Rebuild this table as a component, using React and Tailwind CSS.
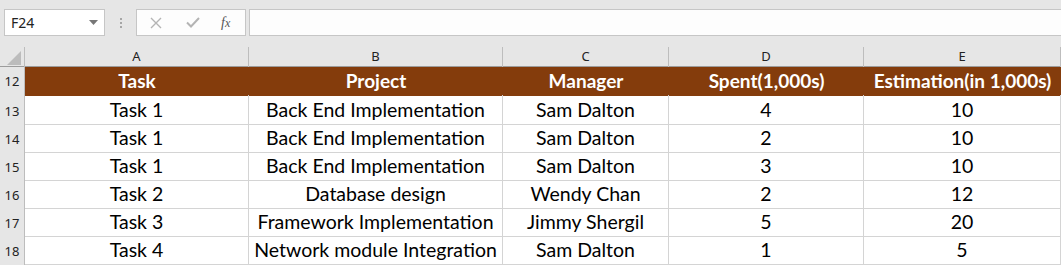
import React from 'react';

const rows = [
  { n: 13, task: 'Task 1', project: 'Back End Implementation', manager: 'Sam Dalton', spent: '4', est: '10' },
  { n: 14, task: 'Task 1', project: 'Back End Implementation', manager: 'Sam Dalton', spent: '2', est: '10' },
  { n: 15, task: 'Task 1', project: 'Back End Implementation', manager: 'Sam Dalton', spent: '3', est: '10' },
  { n: 16, task: 'Task 2', project: 'Database design', manager: 'Wendy Chan', spent: '2', est: '12' },
  { n: 17, task: 'Task 3', project: 'Framework Implementation', manager: 'Jimmy Shergil', spent: '5', est: '20' },
  { n: 18, task: 'Task 4', project: 'Network module Integration', manager: 'Sam Dalton', spent: '1', est: '5' },
];

const cols = 'grid grid-cols-[25px_224px_254px_166px_195px_1fr]';
const cell = 'flex items-center justify-center border-r border-b border-[#d4d4d4] text-[19.5px] text-black';
const rowHead = "flex items-end justify-center pb-[3px] border-r border-b border-[#bdbdbd] bg-[#e6e6e6] text-[13px] text-[#222] font-['Noto_Sans',sans-serif]";

function FormulaBar() {
  return (
    <div className="flex h-[47px] pt-[9px] pl-[4px]">
      <div className="flex h-[27px] w-[101px] items-center justify-between border border-[#c6c6c6] bg-white pl-[6px] pr-[6px] text-[14px] text-[#222]">
        <span>F24</span>
        <svg width="9" height="5" viewBox="0 0 9 5"><path d="M0 0h9L4.5 5z" fill="#777" /></svg>
      </div>
      <div className="flex h-[27px] w-[31px] flex-col items-center justify-center gap-[2px]">
        <span className="h-[2px] w-[2px] bg-[#a6a6a6]" />
        <span className="h-[2px] w-[2px] bg-[#a6a6a6]" />
        <span className="h-[2px] w-[2px] bg-[#a6a6a6]" />
      </div>
      <div className="flex h-[27px] w-[110px] items-center border border-[#c6c6c6] bg-[#fdfdfd]">
        <svg className="ml-[13px]" width="12" height="12" viewBox="0 0 12 12">
          <path d="M1 1l10 10M11 1L1 11" stroke="#b4b4b4" strokeWidth="1.4" />
        </svg>
        <svg className="ml-[24px]" width="14" height="11" viewBox="0 0 14 11">
          <path d="M1 5.5l4 4L13 1" stroke="#b4b4b4" strokeWidth="2" fill="none" />
        </svg>
        <span className="ml-[21px] font-['Liberation_Serif',serif] text-[14px] italic text-[#555]">
          f<span className="text-[12px]">x</span>
        </span>
      </div>
      <div className="ml-[3px] h-[27px] flex-1 border-y border-l border-[#c6c6c6] bg-[#fdfdfd]" />
    </div>
  );
}

export default function App() {
  return (
    <div className="h-[265px] w-[1061px] overflow-hidden bg-[#e6e6e6] font-['Noto_Sans',sans-serif]">
      <FormulaBar />
      <div className={`${cols} h-[20px] border-b border-[#9c9c9c] bg-[#e6e6e6] text-[13px] text-[#222]`}>
        <div className="relative border-r border-[#bdbdbd]">
          <svg className="absolute bottom-[3px] right-[3px]" width="14" height="14" viewBox="0 0 14 14">
            <path d="M14 0v14H0z" fill="#bcbcbc" />
          </svg>
        </div>
        {['A', 'B', 'C', 'D', 'E'].map((c) => (
          <div key={c} className="flex items-end justify-center border-r border-[#bdbdbd] pb-[1px]">
            {c}
          </div>
        ))}
      </div>
      <div className="bg-white font-['Lato',sans-serif]">
        <div className={`${cols} h-[28px]`}>
          <div className={rowHead}>12</div>
          {['Task', 'Project', 'Manager', 'Spent(1,000s)', 'Estimation(in 1,000s)'].map((h) => (
            <div key={h} className="flex items-center justify-center bg-[#843c0c] text-[19px] font-bold text-white">
              {h}
            </div>
          ))}
        </div>
        {rows.map((r) => (
          <div key={r.n} className={`${cols} h-[28px]`}>
            <div className={rowHead}>{r.n}</div>
            <div className={cell}>{r.task}</div>
            <div className={cell}>{r.project}</div>
            <div className={cell}>{r.manager}</div>
            <div className={cell}>{r.spent}</div>
            <div className={cell}>{r.est}</div>
          </div>
        ))}
        <div className={`${cols} h-[28px]`}>
          <div className={rowHead} />
          <div className="border-r border-[#d4d4d4]" />
          <div className="border-r border-[#d4d4d4]" />
          <div className="border-r border-[#d4d4d4]" />
          <div className="border-r border-[#d4d4d4]" />
          <div />
        </div>
      </div>
    </div>
  );
}
